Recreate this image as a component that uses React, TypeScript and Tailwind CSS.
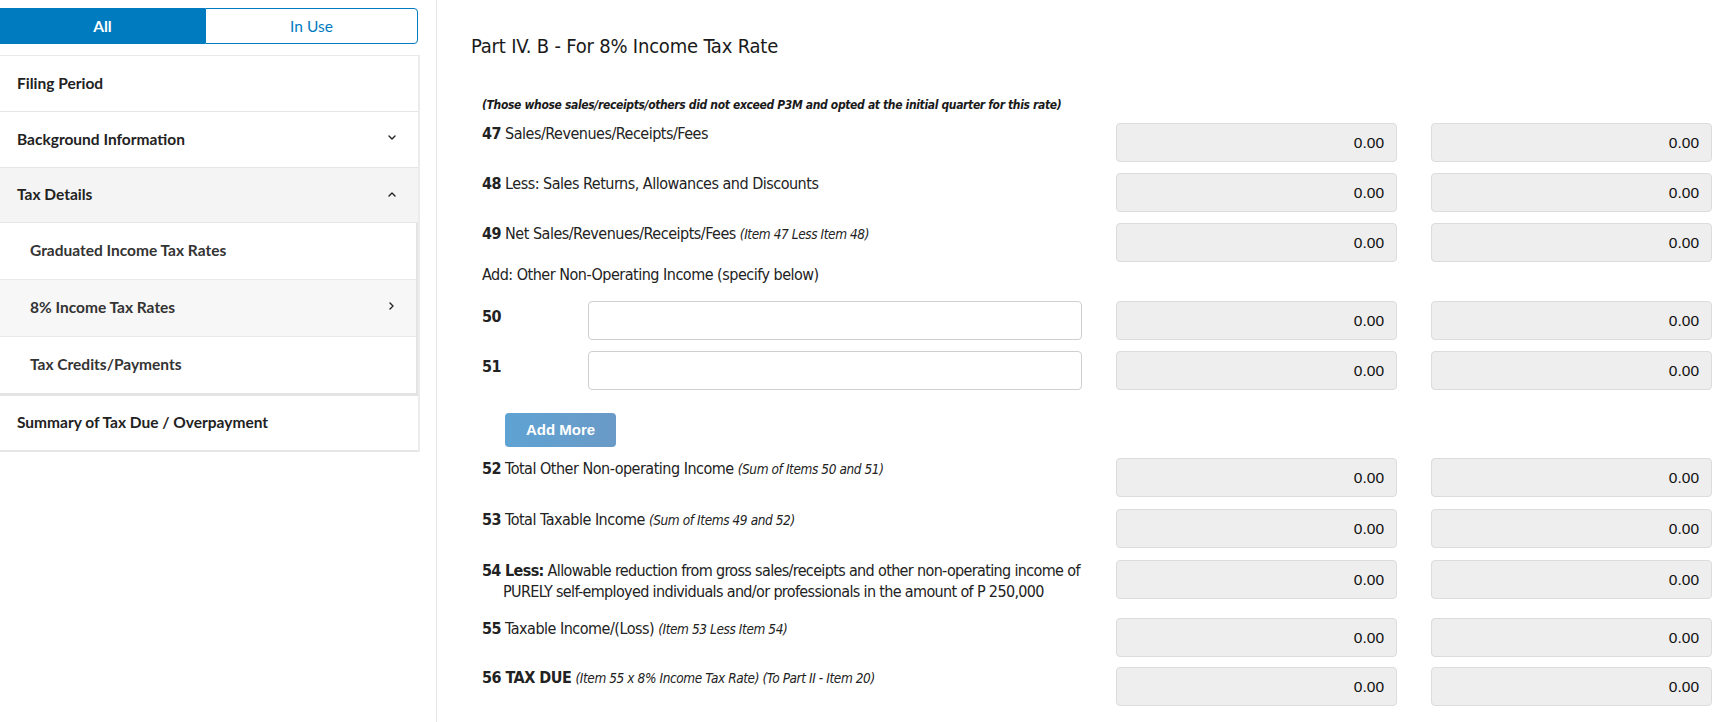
import React from 'react';

const labelFont = { fontFamily: '"Liberation Sans Narrow", "DejaVu Sans Condensed", "Liberation Sans", sans-serif' };

function Chevron({ dir }: { dir: 'down' | 'up' | 'right' }) {
  const d = dir === 'down' ? 'M1 1 L4 4 L7 1' : dir === 'up' ? 'M1 4 L4 1 L7 4' : 'M1 1 L4 4 L1 7';
  const w = dir === 'right' ? 5 : 8;
  const h = dir === 'right' ? 8 : 5;
  return (
    <svg width={w} height={h} viewBox={`0 0 ${w} ${h}`} className="text-[#222]">
      <path d={d} fill="none" stroke="currentColor" strokeWidth="1.4" strokeLinecap="round" strokeLinejoin="round" />
    </svg>
  );
}

function Amount() {
  return (
    <div className="w-[281px] h-[39px] shrink-0 rounded-[4px] border border-[#dcdcdc] bg-[#eeeeee] flex items-center justify-end pr-[12px] text-[15.5px] text-[#111] font-['Liberation_Sans',sans-serif]">
      0.00
    </div>
  );
}

function Row({ children, className = '', center = false }: { children: React.ReactNode; className?: string; center?: boolean }) {
  return (
    <div className={`flex gap-[34px] ${center ? 'items-center' : 'items-start'} ${className}`}>
      <div className="flex-1 min-w-0 text-[16px] leading-[21px] tracking-[-0.5px] text-[#222]" style={labelFont}>
        {children}
      </div>
      <Amount />
      <Amount />
    </div>
  );
}

const Note = ({ children }: { children: React.ReactNode }) => (
  <span className="italic text-[13.5px] tracking-[-0.4px]">{children}</span>
);

export default function App() {
  return (
    <div className="flex min-h-screen bg-white font-['Lato',sans-serif]">
      {/* sidebar */}
      <aside className="w-[437px] shrink-0 border-r border-[#e6e6e6] pr-[18px] pt-[8px]">
        <div className="flex h-[36px] text-[15.5px]">
          <button className="w-[205px] bg-[#007bc0] text-white font-bold pt-[2px]">All</button>
          <button className="flex-1 border border-[#007bc0] rounded-r-[4px] text-[#007bc0] pt-[2px]">In Use</button>
        </div>

        <div className="mt-[11px] border-t border-[#e8e8e8] bg-white shadow-[2px_0_0_#ececec] text-[15.5px]">
          <div className="h-[56px] flex items-center px-[17px] border-b border-[#e6e6e6] font-bold text-[#222]">
            Filing Period
          </div>
          <div className="h-[56px] flex items-center justify-between pl-[17px] pr-[22px] border-b border-[#e6e6e6] font-bold text-[#222]">
            <span>Background Information</span>
            <span className="-mt-[4px]"><Chevron dir="down" /></span>
          </div>
          <div className="h-[55px] flex items-center justify-between pl-[17px] pr-[22px] bg-[#f4f4f4] border-b border-[#e6e6e6] font-bold text-[#222]">
            <span>Tax Details</span>
            <span className="-mt-[2px]"><Chevron dir="up" /></span>
          </div>
          <div className="border-r-2 border-[#e4e4e4] border-b-[3px] text-[#333] font-bold">
            <div className="h-[57px] flex items-center pl-[30px] border-b border-[#e8e8e8]">Graduated Income Tax Rates</div>
            <div className="h-[57px] flex items-center justify-between pl-[30px] pr-[22px] bg-[#f7f7f7] border-b border-[#e8e8e8]">
              <span>8% Income Tax Rates</span>
              <span className="-mt-[4px]"><Chevron dir="right" /></span>
            </div>
            <div className="h-[56px] flex items-center pl-[30px]">Tax Credits/Payments</div>
          </div>
          <div className="h-[56px] flex items-center px-[17px] border-b-[2px] border-[#e6e6e6] font-bold text-[#222]">
            Summary of Tax Due / Overpayment
          </div>
        </div>
      </aside>

      {/* main */}
      <main className="flex-1 min-w-0 pl-[34px] pr-[14px] pt-[32px] pb-[16px] text-[#222]">
        <h1 className="text-[20px] leading-[28px] tracking-[-0.2px] text-[#1a1a1a]" style={labelFont}>
          Part IV. B - For 8% Income Tax Rate
        </h1>

        <div className="pl-[11px]">
          <p className="mt-[36px] text-[12px] leading-[18px] font-bold italic tracking-[-0.35px] text-[#1a1a1a]" style={labelFont}>
            (Those whose sales/receipts/others did not exceed P3M and opted at the initial quarter for this rate)
          </p>

          <Row className="mt-[9px]">
            <b>47</b> Sales/Revenues/Receipts/Fees
          </Row>
          <Row className="mt-[11px]">
            <b>48</b> Less: Sales Returns, Allowances and Discounts
          </Row>
          <Row className="mt-[11px]">
            <b>49</b> Net Sales/Revenues/Receipts/Fees <Note>(Item 47 Less Item 48)</Note>
          </Row>

          <div className="mt-[2px] text-[16px] leading-[21px] tracking-[-0.5px]" style={labelFont}>
            Add: Other Non-Operating Income (specify below)
          </div>

          {['50', '51'].map((n, i) => (
            <Row key={n} center className={i === 0 ? 'mt-[16px]' : 'mt-[11px]'}>
              <div className="flex items-center">
                <b className="w-[106px] shrink-0 -mt-[8px]">{n}</b>
                <input className="flex-1 min-w-0 h-[39px] rounded-[4px] border border-[#cfcfcf] bg-white px-3 outline-none" />
              </div>
            </Row>
          ))}

          <button className="mt-[23px] ml-[23px] w-[111px] h-[34px] rounded-[4px] bg-gradient-to-r from-[#5ea3d3] to-[#6a9ac7] text-white font-bold text-[15px] font-['Liberation_Sans',sans-serif]">
            Add More
          </button>

          <Row className="mt-[11px]">
            <b>52</b> Total Other Non-operating Income <Note>(Sum of Items 50 and 51)</Note>
          </Row>
          <Row className="mt-[12px]">
            <b>53</b> Total Taxable Income <Note>(Sum of Items 49 and 52)</Note>
          </Row>
          <Row className="mt-[12px]">
            <p className="whitespace-nowrap tracking-[-0.65px]">
              <b>54 Less:</b> Allowable reduction from gross sales/receipts and other non-operating income of
            </p>
            <p className="pl-[21px] whitespace-nowrap tracking-[-0.65px]">
              PURELY self-employed individuals and/or professionals in the amount of P 250,000
            </p>
          </Row>
          <Row className="mt-[16px]">
            <b>55</b> Taxable Income/(Loss) <Note>(Item 53 Less Item 54)</Note>
          </Row>
          <Row className="mt-[10px]">
            <b>56 TAX DUE</b> <Note>(Item 55 x 8% Income Tax Rate) (To Part II - Item 20)</Note>
          </Row>
        </div>
      </main>
    </div>
  );
}
